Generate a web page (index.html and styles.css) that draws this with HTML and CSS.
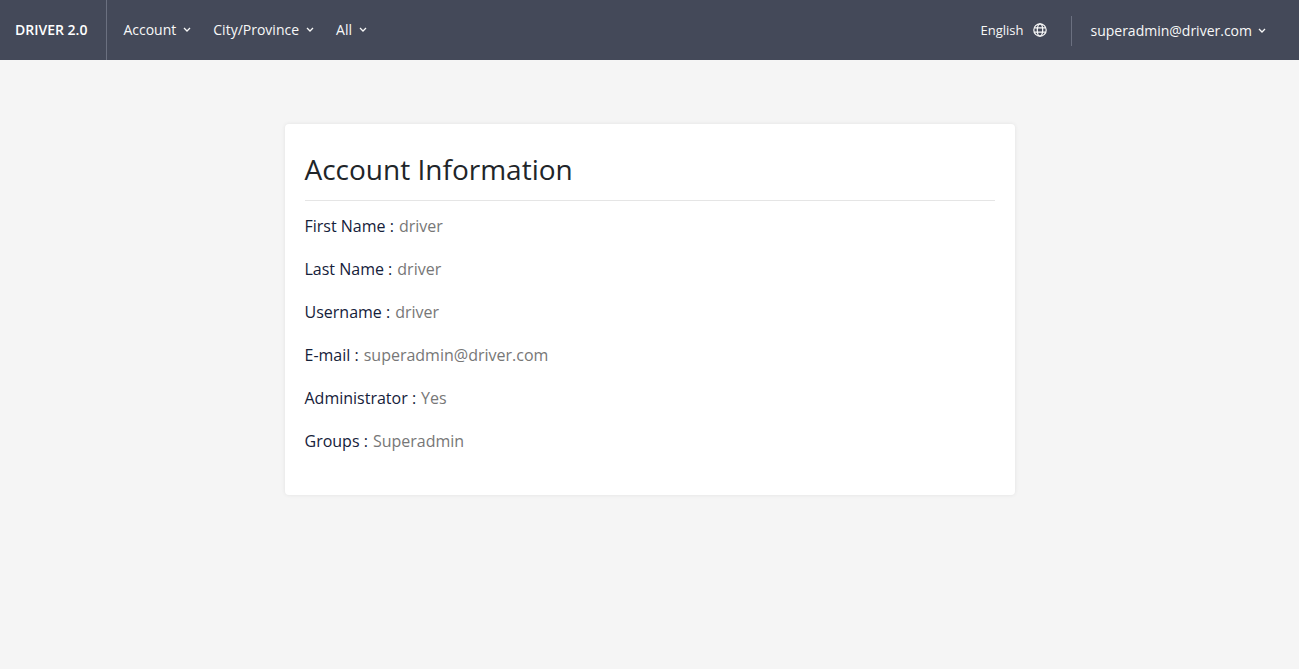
FILE: index.html
```html
<!DOCTYPE html>
<html lang="en">
<head>
<meta charset="utf-8">
<meta name="viewport" content="width=device-width, initial-scale=1">
<title>DRIVER 2.0</title>
<link rel="stylesheet" href="styles.css">
</head>
<body>
<header class="navbar">
  <a class="brand" href="#">DRIVER 2.0</a>
  <nav class="menu">
    <button class="menu-item" type="button">Account <svg class="chevron" viewBox="0 0 8 6"><path d="M1 1l3 3 3-3"/></svg></button>
    <button class="menu-item" type="button">City/Province <svg class="chevron" viewBox="0 0 8 6"><path d="M1 1l3 3 3-3"/></svg></button>
    <button class="menu-item" type="button">All <svg class="chevron" viewBox="0 0 8 6"><path d="M1 1l3 3 3-3"/></svg></button>
  </nav>
  <div class="tools">
    <button class="language" type="button">English
      <svg class="globe" viewBox="0 0 14 14"><circle cx="7" cy="7" r="6.2"/><ellipse cx="7" cy="7" rx="2.7" ry="6.2"/><path d="M1.3 4.9h11.4M1.3 9.1h11.4"/></svg>
    </button>
    <button class="user" type="button">superadmin@driver.com <svg class="chevron" viewBox="0 0 8 6"><path d="M1 1l3 3 3-3"/></svg></button>
  </div>
</header>
<main class="page">
  <section class="card">
    <h1 class="title">Account Information</h1>
    <dl class="details">
      <div class="row"><dt>First Name :</dt><dd>driver</dd></div>
      <div class="row"><dt>Last Name :</dt><dd>driver</dd></div>
      <div class="row"><dt>Username :</dt><dd>driver</dd></div>
      <div class="row"><dt>E-mail :</dt><dd>superadmin@driver.com</dd></div>
      <div class="row"><dt>Administrator :</dt><dd>Yes</dd></div>
      <div class="row"><dt>Groups :</dt><dd>Superadmin</dd></div>
    </dl>
  </section>
</main>
</body>
</html>
```
FILE: styles.css
```css
* { box-sizing: border-box; }
body {
  margin: 0;
  background: #f5f5f5;
  color: #212529;
  font-family: "Open Sans", sans-serif;
  font-size: 16px;
  line-height: 24px;
}
button {
  padding: 0;
  border: 0;
  background: none;
  color: inherit;
  font: inherit;
  cursor: pointer;
}
.navbar {
  display: flex;
  align-items: center;
  height: 60px;
  padding-right: 33px;
  background: #444959;
  color: #f8f8f8;
  font-size: 14px;
}
.brand {
  align-self: stretch;
  display: flex;
  align-items: center;
  padding: 0 19px 0 15px;
  border-right: 1px solid #6b7080;
  color: #fff;
  font-weight: 600;
  text-decoration: none;
}
.menu {
  display: flex;
  gap: 22px;
  margin-right: auto;
  padding-left: 16px;
}
.tools {
  display: flex;
  align-items: center;
  padding-top: 2px;
}
.menu-item, .language, .user {
  display: flex;
  align-items: center;
  gap: 7px;
}
.chevron {
  width: 8px;
  height: 6px;
  fill: none;
  stroke: currentColor;
  stroke-width: 1.3;
}
.language {
  height: 30px;
  gap: 10px;
  padding: 0 24px 2px 0;
  border-right: 1px solid #6b7080;
  font-size: 13px;
}
.globe {
  width: 14px;
  height: 14px;
  fill: none;
  stroke: currentColor;
  stroke-width: 1.2;
}
.user {
  gap: 6px;
  padding-left: 18px;
}
.page { padding: 64px 16px; }
.card {
  max-width: 730px;
  margin: 0 auto;
  padding: 27px 20px 42px;
  border-radius: 4px;
  background: #fff;
  box-shadow: 0 0 4px rgba(0, 0, 0, 0.08);
}
.title {
  margin: 0;
  padding-bottom: 13px;
  border-bottom: 1px solid #e5e5e5;
  font-size: 28px;
  font-weight: 400;
  line-height: 36px;
}
.details {
  display: grid;
  gap: 19px;
  margin: 13px 0 0;
}
.row {
  display: flex;
  gap: 5px;
}
.row dt { color: #15213a; }
.row dd { margin: 0; color: #777; }
```
